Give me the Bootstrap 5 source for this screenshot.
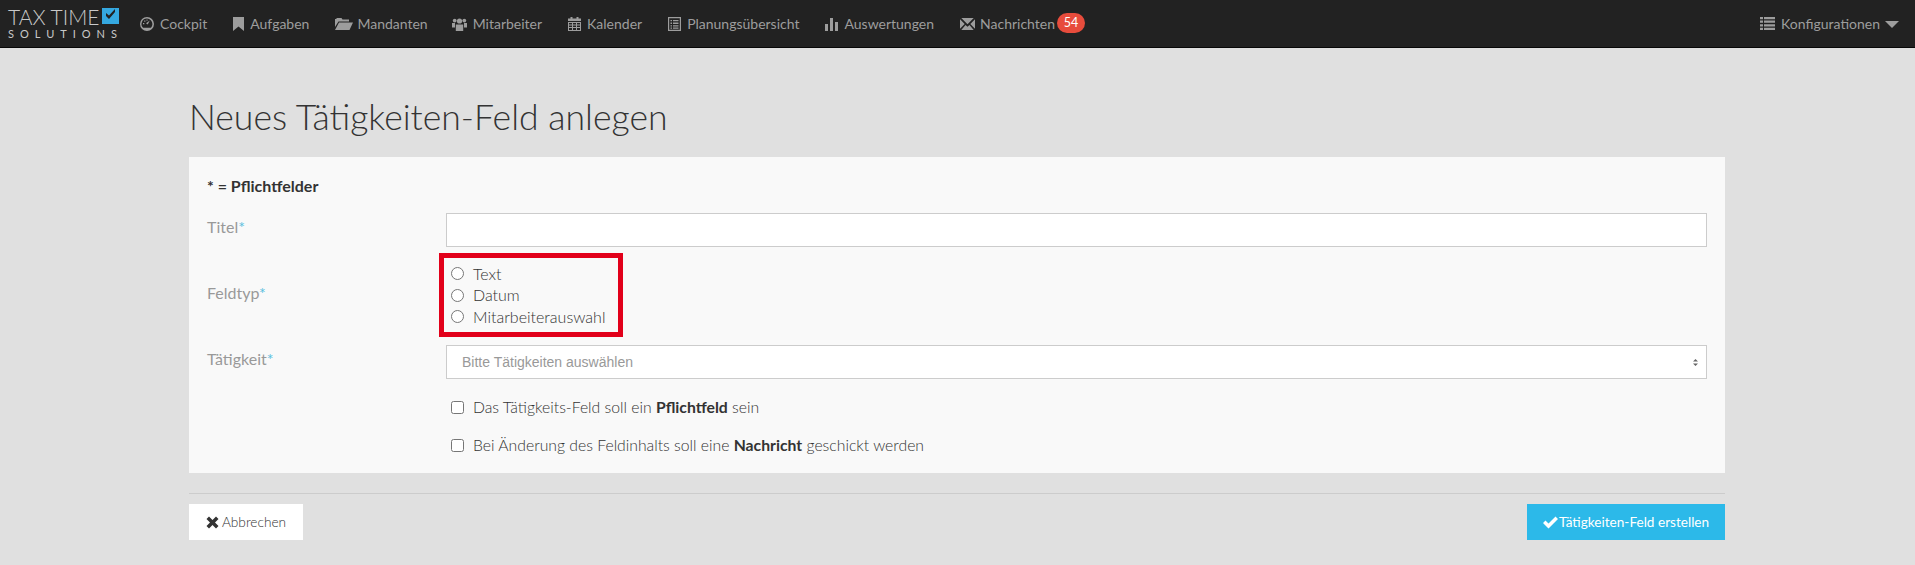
<!DOCTYPE html>
<html lang="de"><head><meta charset="utf-8"><title>Neues Tätigkeiten-Feld anlegen</title>
<link href="https://cdn.jsdelivr.net/npm/bootstrap@5.3.0/dist/css/bootstrap.min.css" rel="stylesheet">
<style>
html,body{height:565px;overflow:hidden}
body{background:#e0e0e0;font-family:Lato,"Liberation Sans",sans-serif;font-size:14px;color:#333;font-weight:300}
.topbar{background:#222;height:48px;border-bottom:1px solid #080808;padding:0 15px 0 7px;align-items:stretch}
.brand-box{width:111px;height:32px;margin-top:7px;margin-right:8px;color:#c9c9c9;display:block}
.brand-a{font-size:21px;line-height:20px;font-weight:300;display:flex;align-items:flex-start;justify-content:space-between}
.brand-b{font-size:11px;line-height:10px;letter-spacing:6px;font-weight:400;margin-top:2px;white-space:nowrap}
.brand-check{width:17px;height:16px;flex:none;margin-top:1px}
.navbar-expand .navbar-nav.topnav .nav-link{color:#9d9d9d;font-weight:400;font-size:14px;padding:0 13px;display:flex;align-items:center;gap:6px;height:47px;white-space:nowrap}
.navbar-expand .navbar-nav.topnav .nav-link.end-link{padding-right:0}
.navbar-expand .navbar-nav.topnav .nav-link.tight-link{gap:4px;padding-right:11px}
.navbar-expand .navbar-nav.topnav .nav-link.mail-link{gap:5px}
.topnav svg{fill:#9d9d9d;flex:none}
.msg-count{background:#e74c3c;color:#fff;border-radius:11px;font-size:12.5px;font-weight:400;padding:0;width:28px;height:20px;line-height:20px;text-align:center;margin-left:-3px;margin-top:-1px}
.nav-caret{width:0;height:0;border-left:7px solid transparent;border-right:7px solid transparent;border-top:7px solid #9d9d9d;margin-left:-1px;margin-top:2px}
.page-wrap{width:1536px;margin-left:189px}
.page-title{font-size:35.6px;font-weight:300;line-height:44px;margin:0;padding-top:47px;height:109px;color:#333}
.form-panel{background:#f9f9f9;height:316px;padding:18px 18px 0}
.req-note{font-weight:700;font-size:16px;line-height:20px;margin:0;height:38px;padding-top:1px;color:#333}
.field-label{width:239px;flex:none;color:#999;font-weight:400;font-size:16px;line-height:20px}
.req{color:#5bc0de}
.field-input{height:34px;border:1px solid #ccc;border-radius:0;background:#fff;font-size:12px;box-shadow:none}
.field-select{height:34px;border:1px solid #ccc;border-radius:0;font-family:"Liberation Sans",sans-serif;font-size:14px;color:#999;padding:0 30px 0 15px;background-color:#fff;background-image:url("data:image/svg+xml,%3Csvg xmlns='http://www.w3.org/2000/svg' width='7' height='9' fill='%23666'%3E%3Cpath d='M3.500 1 6 3.500H1zM1 5.500h5L3.500 8z'/%3E%3C/svg%3E");background-position:right 7px center;background-size:7px 9px}
.type-row{margin-top:6px}
.radio-group{position:relative;padding-top:10px;height:84px;padding-left:5px}
.mark-frame{position:absolute;left:-7px;top:0;width:184px;height:84px;border:5px solid #e2001a;pointer-events:none}
.opt-line{display:flex;align-items:center;gap:9px;height:21.5px;color:#333;font-size:16px;font-weight:300;margin:0}
.opt-line input{margin:0;width:13px;height:13px;accent-color:#666;flex:none}
.check-row{margin-top:18px}
.check-line{display:flex;align-items:center;gap:9px;margin:0 0 0 5px;height:20px;font-size:15.75px;font-weight:300;color:#333}
.check-line input{margin:0;width:13px;height:13px;flex:none}
.check-line b{font-weight:700}
.rule{border:0;border-top:1px solid #ccc;margin:20px 0 10px;opacity:1}
.btn-cancel,.btn-save{border:0;border-radius:0;height:36px;font-size:13px;display:flex;align-items:center;font-weight:400;padding:0}
.btn-cancel{background:#fff;color:#333;width:114px;justify-content:center;gap:3px;font-weight:300;font-size:13.7px}
.btn-save{background:#2cb9e9;color:#fff;width:198px;justify-content:center;gap:1px;font-size:13.6px}
</style></head><body>
<nav class="navbar navbar-expand topbar p-0 ps-2 pe-3 d-flex flex-nowrap justify-content-between">
<div class="d-flex">
<a class="brand-box text-decoration-none" href="#">
<span class="brand-a">TAX TIME<svg class="brand-check" viewBox="0 0 17 16"><rect width="17" height="16" fill="#35a8e0"/><path d="M4 8l3 3 6-7v-3L7 7.500 4 5z" fill="#222"/></svg></span>
<span class="brand-b d-block">SOLUTIONS</span></a>
<ul class="navbar-nav topnav">
<li class="nav-item"><a class="nav-link" href="#"><svg width="14" height="14" viewBox="0 0 14 14"><path fill-rule="evenodd" d="M7 0a7 7 0 1 0 0 14A7 7 0 0 0 7 0zm0 1.600a5.400 5.400 0 0 1 5.400 5.400c0 1.500-.6 2.800-1.500 3.800H3.100A5.400 5.400 0 0 1 7 1.600z"/><path d="M6 6.200 9.800 3.400 7.700 7.600zM3 6h1.300v1.200H3zM4.200 3.600h1.200v1.200H4.200zM6.500 2.500h1v1.200h-1z"/></svg>Cockpit</a></li>
<li class="nav-item"><a class="nav-link" href="#"><svg width="11" height="14" viewBox="0 0 11 14"><path d="M0 0h11v14L5.500 9.500 0 14z"/></svg>Aufgaben</a></li>
<li class="nav-item"><a class="nav-link tight-link" href="#"><svg width="18" height="14" viewBox="0 0 18 14"><path d="M0 2h1.500V1h5l1 1.500H14V4.500H3.500L0 10zM4 5.500h14L14.500 13H0z"/></svg>Mandanten</a></li>
<li class="nav-item"><a class="nav-link" href="#"><svg width="15" height="14" viewBox="0 0 15 14"><circle cx="7.500" cy="4" r="2.600"/><circle cx="2.700" cy="3.600" r="1.900"/><circle cx="12.300" cy="3.600" r="1.900"/><path d="M3.800 7.500h7.400v6.500H3.800zM0 6h3v4.500H0zM12 6h3v4.500h-3z"/></svg>Mitarbeiter</a></li>
<li class="nav-item"><a class="nav-link" href="#"><svg width="13" height="14" viewBox="0 0 13 14"><path d="M2.500 0h2v1.500h4V0h2v1.500H13V4H0V1.500h2.500z"/><path fill-rule="evenodd" d="M0 5h13v9H0zM1 6v1.500h3V6zM5 6v1.500h3V6zM9 6v1.500h3V6zM1 8.500V10h3V8.500zM5 8.500V10h3V8.500zM9 8.500V10h3V8.500zM1 11v2h3v-2zM5 11v2h3v-2zM9 11v2h3v-2z"/></svg>Kalender</a></li>
<li class="nav-item"><a class="nav-link" href="#"><svg width="13" height="14" viewBox="0 0 13 14"><path fill-rule="evenodd" d="M0 0h13v14H0zM1.200 1.200v11.600h10.600V1.200z"/><path d="M2.500 3h1.500v1.300H2.500zM5 3h5.500v1.300H5zM2.500 5.600h1.500v1.300H2.500zM5 5.600h5.500v1.300H5zM2.500 8.200h1.500v1.300H2.500zM5 8.200h5.500v1.300H5zM2.500 10.500h1.500v1.200H2.500zM5 10.500h5.500v1.200H5z"/></svg>Planungsübersicht</a></li>
<li class="nav-item"><a class="nav-link" href="#"><svg width="13" height="14" viewBox="0 0 13 14"><path d="M0 7h3v7H0zM5 1h3v13H5zM10 5h3v9h-3z"/></svg>Auswertungen</a></li>
<li class="nav-item"><a class="nav-link mail-link" href="#"><svg width="15" height="12" viewBox="0 0 15 12"><path d="M1.300 0h12.400L7.500 6.200zM0 1.200 4.700 6 0 10.800zM15 1.200 10.300 6 15 10.800zM1.300 12 5.500 6.900 7.500 8.800 9.500 6.900 13.700 12z"/></svg>Nachrichten<span class="msg-count">54</span></a></li>
</ul></div>
<ul class="navbar-nav topnav"><li class="nav-item"><a class="nav-link end-link" href="#"><svg width="15" height="13" viewBox="0 0 15 13"><path d="M0 0h3v2.200H0zM4 0h11v2.200H4zM0 3.600h3v2.200H0zM4 3.600h11v2.200H4zM0 7.200h3v2.200H0zM4 7.200h11v2.200H4zM0 10.800h3V13H0zM4 10.800h11V13H4z"/></svg>Konfigurationen<span class="nav-caret"></span></a></li></ul>
</nav>
<main class="page-wrap">
<h1 class="page-title">Neues Tätigkeiten-Feld anlegen</h1>
<div class="form-panel">
<p class="req-note">* = Pflichtfelder</p>
<div class="d-flex">
<label class="field-label pt-1">Titel<span class="req">*</span></label>
<input class="form-control field-input" type="text">
</div>
<div class="d-flex type-row align-items-center">
<label class="field-label pb-1">Feldtyp<span class="req">*</span></label>
<div class="radio-group">
<label class="opt-line"><input type="radio" name="t">Text</label>
<label class="opt-line"><input type="radio" name="t">Datum</label>
<label class="opt-line"><input type="radio" name="t">Mitarbeiterauswahl</label>
<span class="mark-frame"></span>
</div></div>
<div class="d-flex mt-2">
<label class="field-label pt-1">Tätigkeit<span class="req">*</span></label>
<select class="form-select field-select"><option>Bitte Tätigkeiten auswählen</option></select>
</div>
<div class="d-flex check-row"><span class="field-label"></span><label class="check-line"><input type="checkbox"><span>Das Tätigkeits-Feld soll ein <b>Pflichtfeld</b> sein</span></label></div>
<div class="d-flex check-row"><span class="field-label"></span><label class="check-line"><input type="checkbox"><span>Bei Änderung des Feldinhalts soll eine <b>Nachricht</b> geschickt werden</span></label></div>
</div>
<hr class="rule">
<div class="d-flex justify-content-between">
<button class="btn btn-cancel" type="button"><svg width="13" height="13" viewBox="0 0 13 13"><path fill="#333" d="M3 .5 6.500 4 10 .5 12.500 3 9 6.500 12.500 10 10 12.500 6.500 9 3 12.500.5 10 4 6.500.5 3z"/></svg>Abbrechen</button>
<button class="btn btn-save" type="button"><svg width="15" height="13" viewBox="0 0 15 13"><path fill="#fff" d="M0 7 2.500 4.500 5.500 7.500 12.500.5 15 3 5.500 12.500z"/></svg>Tätigkeiten-Feld erstellen</button>
</div>
</main>
</body></html>
